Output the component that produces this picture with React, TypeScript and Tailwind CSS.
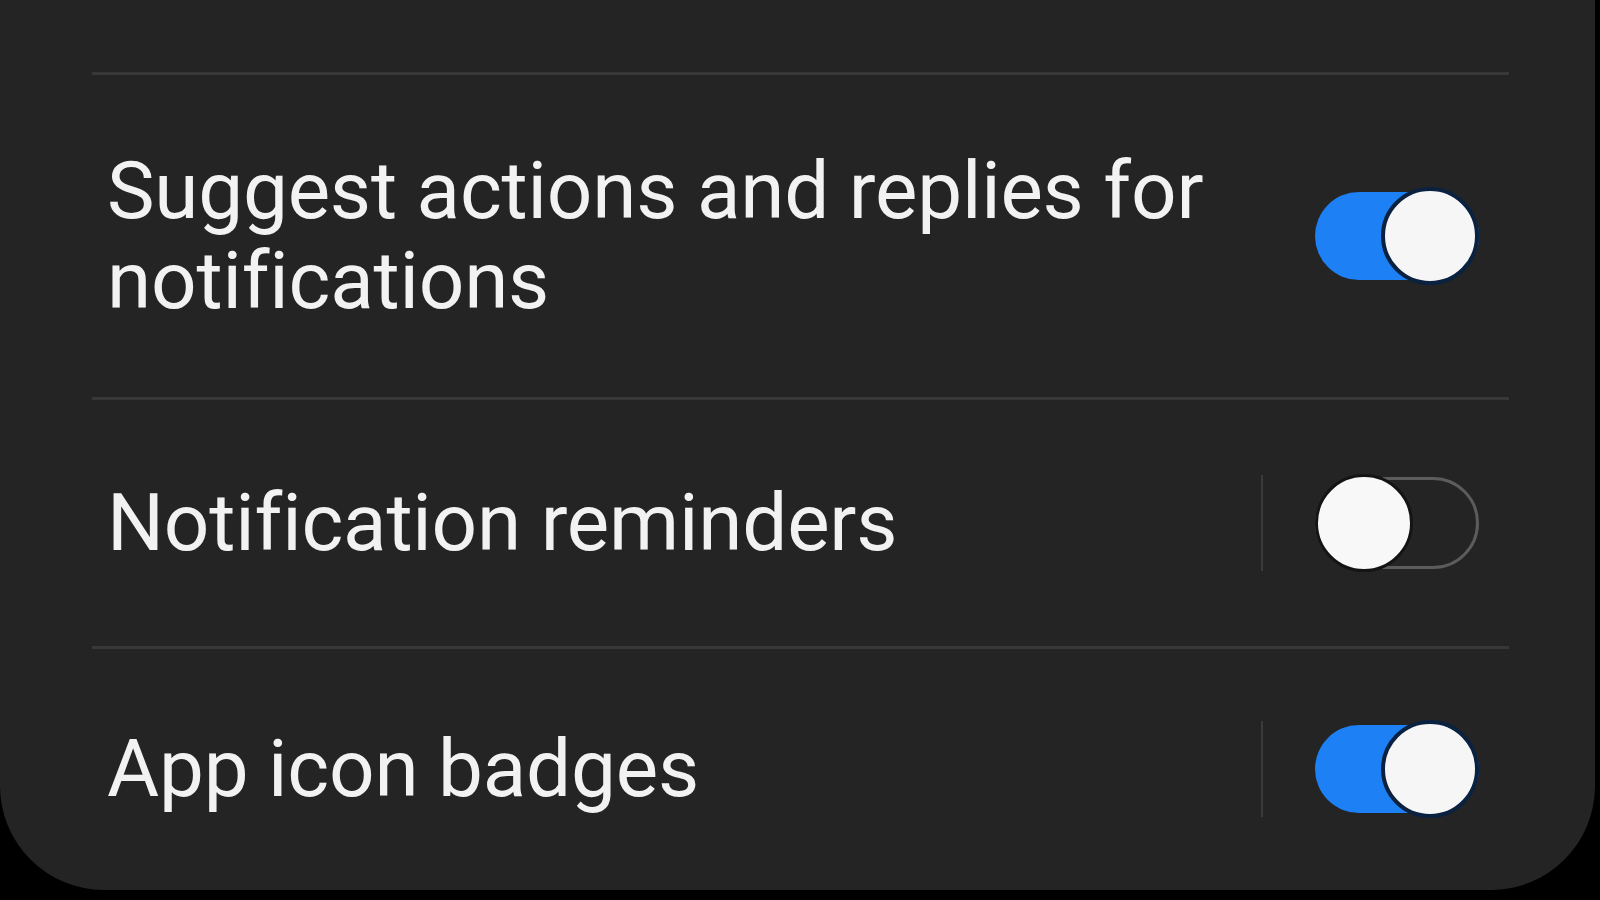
import { FC } from "react";

interface ToggleProps {
  on: boolean;
}

const Toggle: FC<ToggleProps> = ({ on }) => {
  if (on) {
    return (
      <div className="relative w-[164px] h-[98px] flex items-center shrink-0">
        <div className="w-full h-[88px] rounded-full bg-[#1d80f4]" />
        <div className="absolute right-0 top-0 w-[98px] h-[98px] rounded-full bg-[#f6f6f6] border-[4px] border-[#0a2240]" />
      </div>
    );
  }
  return (
    <div className="relative w-[164px] h-[98px] flex items-center shrink-0">
      <div className="w-full h-[92px] rounded-full border-[3px] border-[#5c5c5c]" />
      <div className="absolute left-0 top-0 w-[98px] h-[98px] rounded-full bg-[#f8f8f8] border-[3px] border-[#141414]" />
    </div>
  );
};

const Divider = () => <div className="ml-[92px] mr-[86px] h-[3px] bg-[#383838]" />;

const App: FC = () => {
  return (
    <div
      className="w-[1600px] h-[900px] bg-black overflow-hidden"
      style={{ fontFamily: "Roboto, 'Liberation Sans', sans-serif" }}
    >
      <div className="w-[1595px] h-[890px] bg-[#242424] rounded-b-[104px] text-[#f2f2f2] overflow-hidden">
        {/* previous row, cut off at the top */}
        <div className="h-[72px] overflow-hidden">
          <p className="pl-[108px] -mt-[86px] text-[80px] leading-[90px] text-[#e0e0e0]">On</p>
        </div>
        <Divider />

        <div className="h-[322px] flex items-center pl-[107px] pr-[116px]">
          <p className="flex-1 text-[80px] leading-[90px] tracking-[-0.2px]">
            Suggest actions and replies for
            <br />
            notifications
          </p>
          <Toggle on />
        </div>
        <Divider />

        <div className="h-[246px] flex items-center pl-[107px] pr-[116px]">
          <p className="flex-1 text-[80px] leading-[90px] tracking-[-0.2px]">Notification reminders</p>
          <div className="w-[2px] h-[96px] bg-[#3a3a3a] mr-[52px]" />
          <Toggle on={false} />
        </div>
        <Divider />

        <div className="h-[240px] flex items-center pl-[107px] pr-[116px]">
          <p className="flex-1 text-[80px] leading-[90px] tracking-[-0.2px]">App icon badges</p>
          <div className="w-[2px] h-[96px] bg-[#3a3a3a] mr-[52px]" />
          <Toggle on />
        </div>
      </div>
    </div>
  );
};

export default App;
